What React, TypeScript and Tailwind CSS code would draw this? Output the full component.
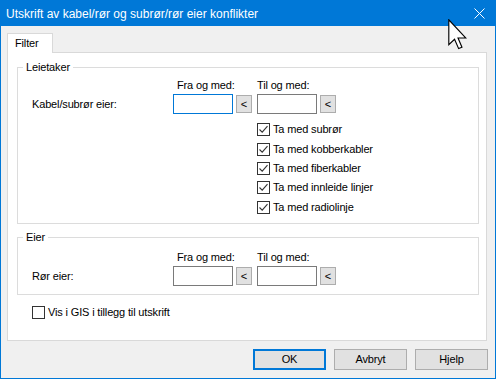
import React from "react";

const Field = ({ focused = false }: { focused?: boolean }) => (
  <div
    className={`h-[20px] w-[60px] bg-white border ${
      focused ? "border-[#0078d7]" : "border-[#7a7a7a]"
    }`}
  />
);

const PickButton = () => (
  <div className="flex h-[18px] w-[16px] items-center justify-center border border-[#adadad] bg-[#e1e1e1] text-[11px] leading-none">
    &lt;
  </div>
);

const Check = ({ checked }: { checked: boolean }) => (
  <div className="flex h-[13px] w-[13px] shrink-0 items-center justify-center border border-[#333] bg-white">
    {checked && (
      <svg width="11" height="11" viewBox="0 0 11 11">
        <path d="M1.5 5.5 L4.2 8.2 L9.5 2.2" fill="none" stroke="#333" strokeWidth="1.1" />
      </svg>
    )}
  </div>
);

const CheckRow = ({ label, h }: { label: string; h: string }) => (
  <div className={`flex items-start gap-[3px] ${h}`}>
    <Check checked />
    <span className="leading-[13px]">{label}</span>
  </div>
);

const RangeRow = ({ label, focused = false }: { label: string; focused?: boolean }) => (
  <>
    <div className="flex h-[15px] items-center">
      <span className="ml-[159px] w-[80px]">Fra og med:</span>
      <span>Til og med:</span>
    </div>
    <div className="mt-[1px] flex h-[20px] items-center">
      <span className="ml-[14px] w-[141px]">{label}</span>
      <Field focused={focused} />
      <div className="ml-[3px]">
        <PickButton />
      </div>
      <div className="ml-[5px]">
        <Field />
      </div>
      <div className="ml-[3px]">
        <PickButton />
      </div>
    </div>
  </>
);

export default function App() {
  return (
    <div className="relative flex h-[379px] w-[496px] flex-col border border-[#0078d7] bg-[#f0f0f0] font-['Liberation_Sans',Arial,sans-serif] text-[11px] tracking-[-0.15px] text-black">
      <div className="flex h-[25px] shrink-0 items-center justify-between bg-[#0078d7] pl-[5px] pr-[10px] text-[12px] tracking-normal text-white">
        <span>Utskrift av kabel/rør og subrør/rør eier konflikter</span>
        <svg width="11" height="11" viewBox="0 0 11 11">
          <path d="M0.5 0.5 L10.5 10.5 M10.5 0.5 L0.5 10.5" stroke="white" strokeWidth="1" />
        </svg>
      </div>

      <div className="mt-[7px] ml-[6px] flex">
        <div className="relative z-10 -mb-px flex h-[20px] w-[46px] items-center border border-b-0 border-[#d9d9d9] bg-white pl-[7px]">
          Filter
        </div>
      </div>

      <div className="ml-[6px] h-[289px] w-[480px] border border-[#d9d9d9] bg-white">
        <fieldset className="mt-[7px] ml-[9px] h-[164px] w-[462px] border border-[#dcdcdc]">
          <legend className="ml-[5px] px-[3px] leading-[15px]">Leietaker</legend>
          <div className="mt-[3px]">
            <RangeRow label="Kabel/subrør eier:" focused />
          </div>
          <div className="mt-[9px] ml-[239px] flex flex-col">
            <CheckRow label="Ta med subrør" h="h-[20px]" />
            <CheckRow label="Ta med kobberkabler" h="h-[19px]" />
            <CheckRow label="Ta med fiberkabler" h="h-[19px]" />
            <CheckRow label="Ta med innleide linjer" h="h-[20px]" />
            <CheckRow label="Ta med radiolinje" h="h-[19px]" />
          </div>
        </fieldset>

        <fieldset className="mt-[6px] ml-[9px] h-[65px] w-[462px] border border-[#dcdcdc]">
          <legend className="ml-[5px] px-[3px] leading-[15px]">Eier</legend>
          <div className="mt-[5px]">
            <RangeRow label="Rør eier:" />
          </div>
        </fieldset>

        <div className="mt-[11px] ml-[24px] flex items-start gap-[3px]">
          <Check checked={false} />
          <span className="leading-[13px]">Vis i GIS i tillegg til utskrift</span>
        </div>
      </div>

      <div className="mt-[8px] flex justify-end gap-[8px] pr-[7px]">
        <button className="h-[21px] w-[73px] border-2 border-[#0078d7] bg-[#e1e1e1]">OK</button>
        <button className="h-[21px] w-[73px] border border-[#adadad] bg-[#e1e1e1]">Avbryt</button>
        <button className="h-[21px] w-[73px] border border-[#adadad] bg-[#e1e1e1]">Hjelp</button>
      </div>

      <svg
        className="absolute left-[447px] top-[18px]"
        width="19"
        height="31"
        viewBox="0 0 12.5 20.5"
      >
        <path
          d="M0.5 0.5 L0.5 17 L4.3 13.4 L7 19.6 L9.2 18.7 L6.6 12.6 L11.8 12.6 Z"
          fill="white"
          stroke="black"
          strokeWidth="0.75"
          strokeLinejoin="miter"
        />
      </svg>
    </div>
  );
}
